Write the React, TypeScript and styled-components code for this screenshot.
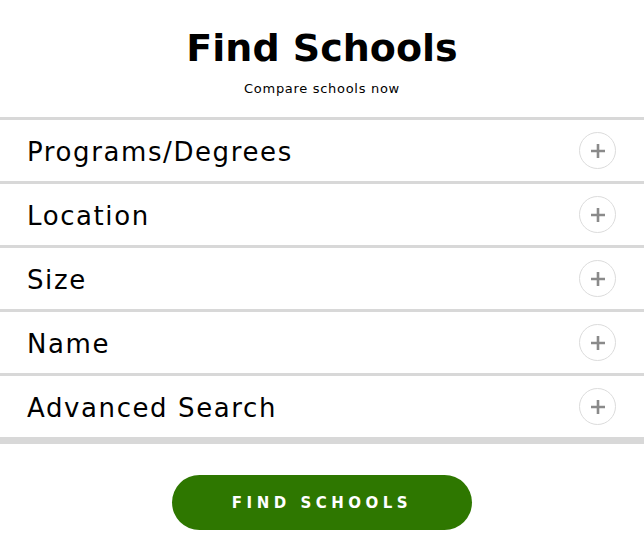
import styled, { createGlobalStyle } from 'styled-components'

const GlobalStyle = createGlobalStyle`
  html, body {
    margin: 0;
    padding: 0;
    background: #fff;
  }
  body {
    font-family: 'DejaVu Sans', 'Noto Sans', sans-serif;
    color: #000;
  }
`

const Page = styled.div`
  width: 644px;
  display: flex;
  flex-direction: column;
`

const Header = styled.header`
  display: flex;
  flex-direction: column;
  align-items: center;
  padding-top: 24px;
  height: 117px;
  box-sizing: border-box;
`

const Title = styled.h1`
  margin: 0;
  font-size: 38px;
  font-weight: 700;
  line-height: 48px;
`

const Subtitle = styled.p`
  margin: 9px 0 0;
  font-size: 13px;
  line-height: 16px;
  letter-spacing: 0.7px;
`

const FilterList = styled.ul`
  list-style: none;
  margin: 0;
  padding: 0;
  border-bottom: 7px solid #d8d8d8;
`

const FilterRow = styled.li`
  display: flex;
  align-items: center;
  justify-content: space-between;
  height: 61px;
  padding: 0 28px 0 27px;
  border-top: 3px solid #d8d8d8;
`

const FilterLabel = styled.span`
  font-size: 26px;
  font-weight: 400;
  letter-spacing: 1.6px;
  padding-top: 3px;
`

const PlusButton = styled.button`
  width: 37px;
  height: 37px;
  border-radius: 50%;
  border: 1px solid #dcdcdc;
  background: #fff;
  display: flex;
  align-items: center;
  justify-content: center;
  padding: 0;
  cursor: pointer;
`

const Footer = styled.div`
  display: flex;
  justify-content: center;
  padding: 31px 0 0;
`

const SubmitButton = styled.button`
  width: 300px;
  height: 55px;
  border: none;
  border-radius: 28px;
  background: #2e7700;
  color: #fff;
  font-family: 'DejaVu Sans', 'Noto Sans', sans-serif;
  font-size: 15px;
  font-weight: 700;
  letter-spacing: 4.5px;
  cursor: pointer;
`

const filters = ['Programs/Degrees', 'Location', 'Size', 'Name', 'Advanced Search']

const PlusIcon = () => (
  <svg width="16" height="16" viewBox="0 0 16 16">
    <path d="M8 1v14M1 8h14" stroke="#8a8a8a" strokeWidth="2.6" />
  </svg>
)

export default function App() {
  return (
    <Page>
      <GlobalStyle />
      <Header>
        <Title>Find Schools</Title>
        <Subtitle>Compare schools now</Subtitle>
      </Header>
      <FilterList>
        {filters.map((f) => (
          <FilterRow key={f}>
            <FilterLabel>{f}</FilterLabel>
            <PlusButton aria-label={`Expand ${f}`}>
              <PlusIcon />
            </PlusButton>
          </FilterRow>
        ))}
      </FilterList>
      <Footer>
        <SubmitButton>FIND SCHOOLS</SubmitButton>
      </Footer>
    </Page>
  )
}
